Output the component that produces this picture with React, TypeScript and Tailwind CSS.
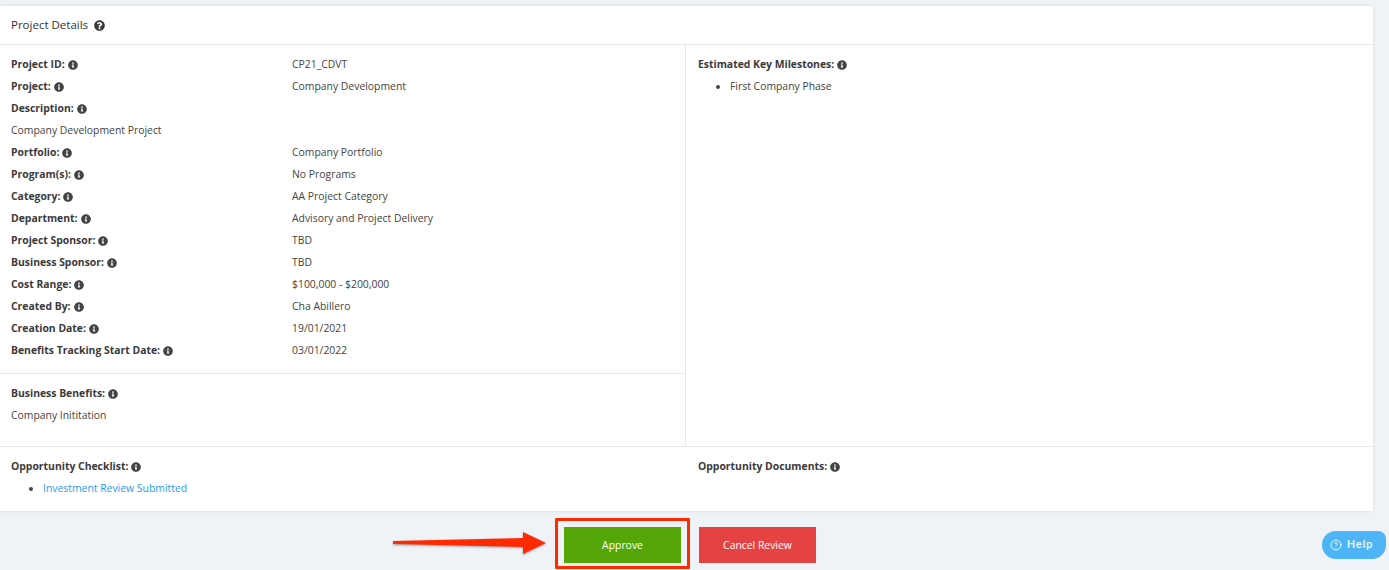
import React from 'react'
import { FaInfoCircle, FaQuestionCircle } from 'react-icons/fa'
import { FiHelpCircle } from 'react-icons/fi'

const rows: [string, string][] = [
    ['Portfolio:', 'Company Portfolio'],
    ['Program(s):', 'No Programs'],
    ['Category:', 'AA Project Category'],
    ['Department:', 'Advisory and Project Delivery'],
    ['Project Sponsor:', 'TBD'],
    ['Business Sponsor:', 'TBD'],
    ['Cost Range:', '$100,000 - $200,000'],
    ['Created By:', 'Cha Abillero'],
    ['Creation Date:', '19/01/2021'],
    ['Benefits Tracking Start Date:', '03/01/2022'],
]

const Label = ({ text }: { text: string }) => (
    <div className="flex items-center gap-[3px] h-[22px] font-bold text-[#3a3a3a]">
        <span>{text}</span>
        <FaInfoCircle className="w-[10px] h-[10px] text-[#444]" />
    </div>
)

const Row = ({ label, value }: { label: string; value: string }) => (
    <div className="grid grid-cols-[281px_1fr] h-[22px] items-center">
        <Label text={label} />
        <div>{value}</div>
    </div>
)

const App = () => {
    return (
        <div className="relative h-[570px] w-[1389px] overflow-hidden bg-[#eff3f8] pt-[6px] text-[10.4px] text-[#444] font-['Open_Sans',sans-serif]">
            <section className="w-[1373px] h-[505px] bg-white shadow-[0_0_3px_rgba(0,0,0,0.12)] flex flex-col">
                <header className="flex items-center gap-[6px] h-[39px] shrink-0 px-[11px] border-b border-[#e8e8e8] text-[11.5px] text-[#333]">
                    <span>Project Details</span>
                    <FaQuestionCircle className="w-[11px] h-[11px] text-[#3a3a3a]" />
                </header>

                <div className="grid grid-cols-[686px_1fr] h-[402px] shrink-0 border-b border-[#e8e8e8]">
                    <div className="border-r border-[#e8e8e8] flex flex-col">
                        <div className="h-[329px] pt-[9px] px-[11px] border-b border-[#e8e8e8]">
                            <Row label="Project ID:" value="CP21_CDVT" />
                            <Row label="Project:" value="Company Development" />
                            <Label text="Description:" />
                            <div className="h-[22px] flex items-center">Company Development Project</div>
                            {rows.map(([label, value]) => (
                                <Row key={label} label={label} value={value} />
                            ))}
                        </div>
                        <div className="pt-[9px] px-[11px]">
                            <Label text="Business Benefits:" />
                            <div className="h-[22px] flex items-center">Company Inititation</div>
                        </div>
                    </div>
                    <div className="pt-[9px] px-[12px]">
                        <Label text="Estimated Key Milestones:" />
                        <ul className="list-disc pl-[32px] -mt-[1px]">
                            <li className="h-[22px] leading-[22px]">First Company Phase</li>
                        </ul>
                    </div>
                </div>

                <div className="grid grid-cols-[686px_1fr] pt-[9px]">
                    <div className="px-[11px]">
                        <Label text="Opportunity Checklist:" />
                        <ul className="list-disc pl-[32px] -mt-[1px]">
                            <li className="h-[22px] leading-[22px]">
                                <a className="text-[#2b9af3]">Investment Review Submitted</a>
                            </li>
                        </ul>
                    </div>
                    <div className="px-[12px]">
                        <Label text="Opportunity Documents:" />
                    </div>
                </div>
            </section>

            <div className="flex justify-center gap-[18px] pt-[16px] w-[1380px] text-white">
                <button className="w-[117px] h-[36px] pt-[1px] bg-[#55a607] text-[10.4px]">Approve</button>
                <button className="w-[117px] h-[36px] pt-[1px] bg-[#e54343] text-[10.4px]">Cancel Review</button>
            </div>

            {/* annotation drawn over the screenshot */}
            <div className="absolute left-[555px] top-[518px] w-[135px] h-[51px] rounded-[1px] border-[3px] border-[#ff2a00]" />
            <svg className="absolute left-[390px] top-[528px] drop-shadow-[0_1px_1px_rgba(0,0,0,0.35)]" width="160" height="30" viewBox="0 0 160 30">
                <path d="M3 13 L133 10 L133 4 L156 15 L133 26 L133 19 L3 16 Z" fill="#ff2a00" />
            </svg>

            <div className="absolute left-[1322px] top-[531px] w-[64px] h-[28px] rounded-l-[14px] rounded-br-[14px] rounded-tr-[8px] bg-[#4db5f5] text-[#eef8ff] flex items-center gap-[5px] pl-[8px] text-[11.5px] font-medium font-['Roboto',sans-serif] tracking-[0.6px]">
                <FiHelpCircle className="w-[12px] h-[12px]" />
                <span>Help</span>
            </div>
        </div>
    )
}

export default App
